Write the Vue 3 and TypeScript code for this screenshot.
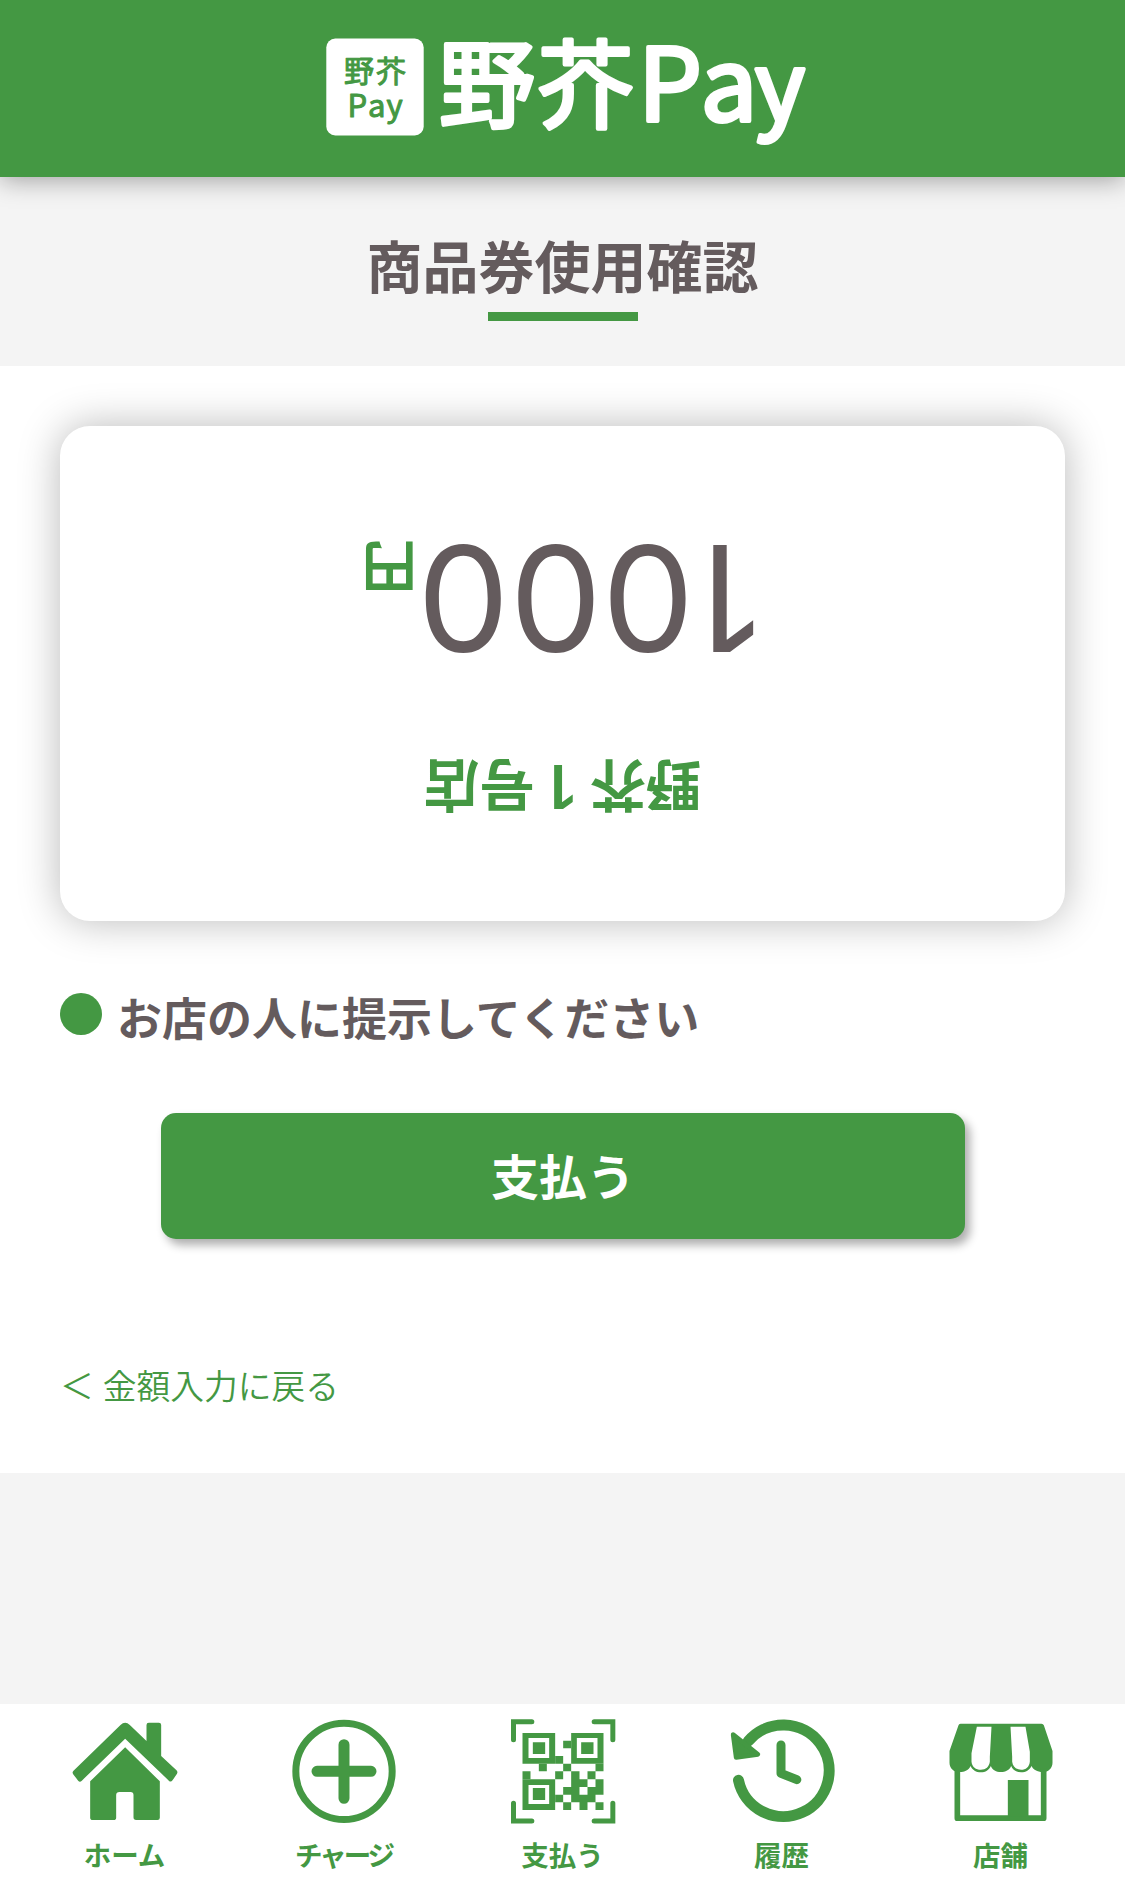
<script setup lang="ts">
interface NavItem {
  id: string
  label: string
  viewBox: string
  tight?: boolean
}

const amount = '1000'

const navItems: NavItem[] = [
  { id: 'home', label: 'ホーム', viewBox: '64.5 69 318 318' },
  { id: 'charge', label: 'チャージ', viewBox: '61.5 69 318 318', tight: true },
  { id: 'pay', label: '支払う', viewBox: '58.5 69 318 318' },
  { id: 'history', label: '履歴', viewBox: '55.5 69 318 318' },
  { id: 'shop', label: '店舗', viewBox: '52.5 69 318 318' },
]
</script>

<template>
  <div class="page">
    <header class="header">
      <svg class="logo" viewBox="320 30 490 120" role="img" aria-label="野芥Pay">
        <rect x="326.3" y="38.5" width="97.4" height="97" rx="9" fill="#fff" />
        <g class="logo-small">
          <text x="344 376" y="81.5" font-size="30">野芥</text>
          <text x="347.5 368 386.5" y="117.3" font-size="31">Pay</text>
        </g>
        <g class="logo-large">
          <text x="439 537.5" y="120" font-size="96">野芥</text>
          <text x="638 700.5 755" y="121" font-size="101">Pa<tspan font-size="96">y</tspan></text>
        </g>
      </svg>
    </header>

    <section class="title-band">
      <h1 class="title">商品券使用確認</h1>
      <div class="title-line"></div>
    </section>

    <main class="main">
      <div class="ticket">
        <div class="ticket-inner">
          <div class="shop-name">野芥<span class="shop-number">1</span>号店</div>
          <div class="amount">
            <span class="digits">{{ amount }}</span><span class="yen">円</span>
          </div>
        </div>
      </div>

      <div class="notice">
        <span class="dot"></span>
        <span class="notice-text">お店の人に提示してください</span>
      </div>

      <button class="pay-button" type="button">支払う</button>

      <a class="back"><span>＜</span><span>金額入力に戻る</span></a>
    </main>

    <nav class="nav">
      <a v-for="item in navItems" :key="item.id" class="nav-item">
        <svg class="nav-icon" :viewBox="item.viewBox">
          <template v-if="item.id === 'home'">
            <path d="M69 227 210 90Q224 77 238 90L288 138V90Q288 83 295 83H325Q332 83 332 90V183L378 226Q383 231 379 237L366 256Q361 263 355 257L224 131 94 257Q88 263 83 257L68 238Q64 232 69 227Z" />
            <path d="M224 157 328 259V368Q328 375 321 375H257Q249 375 249 367V300Q249 291 240 291H207Q197 291 197 300V368Q197 375 189 375H127Q119 375 119 368V259Z" />
          </template>
          <template v-else-if="item.id === 'charge'">
            <circle class="line" cx="220.5" cy="229" r="144.5" stroke-width="21" />
            <path class="line" d="M220.5 149V310M139.5 229H301.5" stroke-width="33" stroke-linecap="round" />
          </template>
          <template v-else-if="item.id === 'pay'">
            <path class="line" d="M69 134V80H124M311 80H367V134M69 325V378H124M311 378H367V325" stroke-width="15" stroke-linecap="round" />
            <path fill-rule="evenodd" d="M96 114H194V206H96ZM114 129V189H176V129ZM127 142H164V177H127Z" />
            <path fill-rule="evenodd" d="M242 114H339V206H242ZM259 129V189H321V129ZM272 142H309V177H272Z" />
            <path fill-rule="evenodd" d="M96 253H194V345H96ZM114 270V327H176V270ZM127 279H164V315H127Z" />
            <path d="M218 137H242V160H218ZM194 183H218V206H194ZM145 206H169V229H145ZM218 206H242V229H218ZM315 206H339V229H315ZM96 229H120V253H96ZM194 229H218V253H194ZM242 229H267V253H242ZM291 229H315V253H291ZM242 253H291V276H242ZM315 253H339V276H315ZM218 276H267V299H218ZM291 276H339V299H291ZM194 299H218V322H194ZM242 299H315V322H242ZM218 322H242V345H218ZM267 322H291V345H267ZM315 322H339V345H315Z" />
          </template>
          <template v-else-if="item.id === 'history'">
            <path class="line" d="M84 256A137.500 137.500 0 1 0 113 139" stroke-width="33" stroke-linecap="round" />
            <path class="joined" d="M68 119 142 178 77 187Z" stroke-width="14" />
            <path class="line" d="M211.500 150V235L259 254" stroke-width="27" stroke-linecap="round" stroke-linejoin="round" />
          </template>
          <template v-else>
            <path d="M57 168 84 91Q85 86 90 86H333Q338 86 340 91L366 168V203C366 220 353 231 337 231C320 231 308 224 303 213C297 225 286 232 272 232C258 232 246 225 242 213C237 225 225 231 211 231C197 231 186 225 181 213C175 225 165 232 151 232C137 232 126 225 120 213C115 225 103 231 87 231C70 231 57 220 57 203Z" />
            <path fill="#fff" d="M139 95H183L178 185V200C176 215 166 224 151 224C136 224 125 216 123 200V175Z" />
            <path fill="#fff" d="M240 95H285L298 170V200C296 216 286 224 272 224C257 224 247 215 245 200V185Z" />
            <path class="line" d="M80.500 220V369.500H339.500V220" stroke-width="17" stroke-linejoin="round" />
            <path d="M232 255H294V365H232Z" />
          </template>
        </svg>
        <span class="nav-label" :class="{ tight: item.tight }">{{ item.label }}</span>
      </a>
    </nav>
  </div>
</template>

<style>
body {
  margin: 0;
}
</style>

<style scoped>
.page {
  display: flex;
  flex-direction: column;
  width: 1125px;
  height: 1883px;
  overflow: hidden;
  background: #f4f4f4;
  color: #645b5d;
  font-family: 'Noto Sans CJK JP', sans-serif;
}

.header {
  position: relative;
  z-index: 1;
  box-sizing: border-box;
  display: flex;
  flex-shrink: 0;
  justify-content: center;
  height: 177px;
  padding: 30px 0 0 5px;
  background: #449843;
  box-shadow: 0 3px 24px rgba(0, 0, 0, 0.35);
}

.logo {
  width: 490px;
  height: 120px;
  overflow: visible;
}

.logo-small {
  fill: #449843;
  stroke: #449843;
  stroke-width: 1;
  stroke-linejoin: round;
  font-weight: 400;
}

.logo-large {
  fill: #fff;
  stroke: #fff;
  stroke-width: 4;
  stroke-linejoin: round;
  font-weight: 400;
}

.title-band {
  display: flex;
  flex-direction: column;
  flex-shrink: 0;
  align-items: center;
  height: 189px;
}

.title {
  margin: 47px 0 0;
  font-size: 56px;
  line-height: 80px;
  font-weight: 700;
}

.title-line {
  width: 150px;
  height: 9px;
  margin-top: 8px;
  background: #449843;
}

.main {
  box-sizing: border-box;
  display: flex;
  flex-direction: column;
  flex-shrink: 0;
  height: 1107px;
  padding: 60px 60px 0;
  background: #fff;
}

.ticket {
  height: 495px;
  border-radius: 30px;
  background: #fff;
  box-shadow: 0 0 42px rgba(0, 0, 0, 0.28);
}

.ticket-inner {
  box-sizing: border-box;
  display: flex;
  flex-direction: column;
  align-items: center;
  height: 100%;
  padding-top: 92px;
  transform: rotate(180deg);
}

.shop-name {
  display: flex;
  font-size: 55.5px;
  line-height: 80px;
  font-weight: 700;
  color: #449843;
}

.shop-number {
  padding-top: 2px;
  width: 55.5px;
  height: 78px;
  text-align: center;
  font-family: Inter, sans-serif;
  font-size: 61px;
  font-weight: 600;
}

.amount {
  display: flex;
  align-items: baseline;
  margin: 61px 0 0 3px;
  line-height: 180px;
}

.digits {
  font-family: Inter, sans-serif;
  font-size: 146.5px;
}

.digits::first-letter {
  letter-spacing: 6px;
}

.yen {
  font-size: 55px;
  font-weight: 700;
  color: #449843;
  transform: translateY(-2px);
}

.notice {
  display: flex;
  align-items: center;
  gap: 15px;
  height: 66px;
  margin-top: 60px;
}

.dot {
  width: 42px;
  height: 42px;
  border-radius: 50%;
  background: #449843;
}

.notice-text {
  padding-top: 5px;
  font-size: 45px;
  line-height: 60px;
  font-weight: 700;
}

.pay-button {
  align-self: center;
  width: 804px;
  height: 126px;
  margin: 66px 0 0 1px;
  padding: 0 0 4px;
  border: 0;
  border-radius: 15px;
  background: #449843;
  box-shadow: 5px 6px 10px rgba(0, 0, 0, 0.32);
  color: #fff;
  font: 700 48px/122px 'Noto Sans CJK JP', sans-serif;
}

.back {
  display: flex;
  gap: 9px;
  margin-top: 121px;
  font-size: 33.75px;
  line-height: 50px;
  font-weight: 350;
  color: #449843;
}

.nav {
  box-sizing: border-box;
  display: flex;
  flex-shrink: 0;
  height: 179px;
  margin-top: 231px;
  padding: 14px 15px 0;
  background: #fff;
}

.nav-item {
  display: flex;
  flex: 1;
  flex-direction: column;
  align-items: center;
  color: #449843;
}

.nav-icon {
  width: 106px;
  height: 106px;
  fill: #449843;
}

.line {
  fill: none;
  stroke: #449843;
}

.joined {
  stroke: #449843;
  stroke-linejoin: round;
}

.nav-label {
  margin-top: 10px;
  font-size: 27.5px;
  line-height: 40px;
  font-weight: 700;
}

.tight {
  letter-spacing: -3px;
}
</style>
